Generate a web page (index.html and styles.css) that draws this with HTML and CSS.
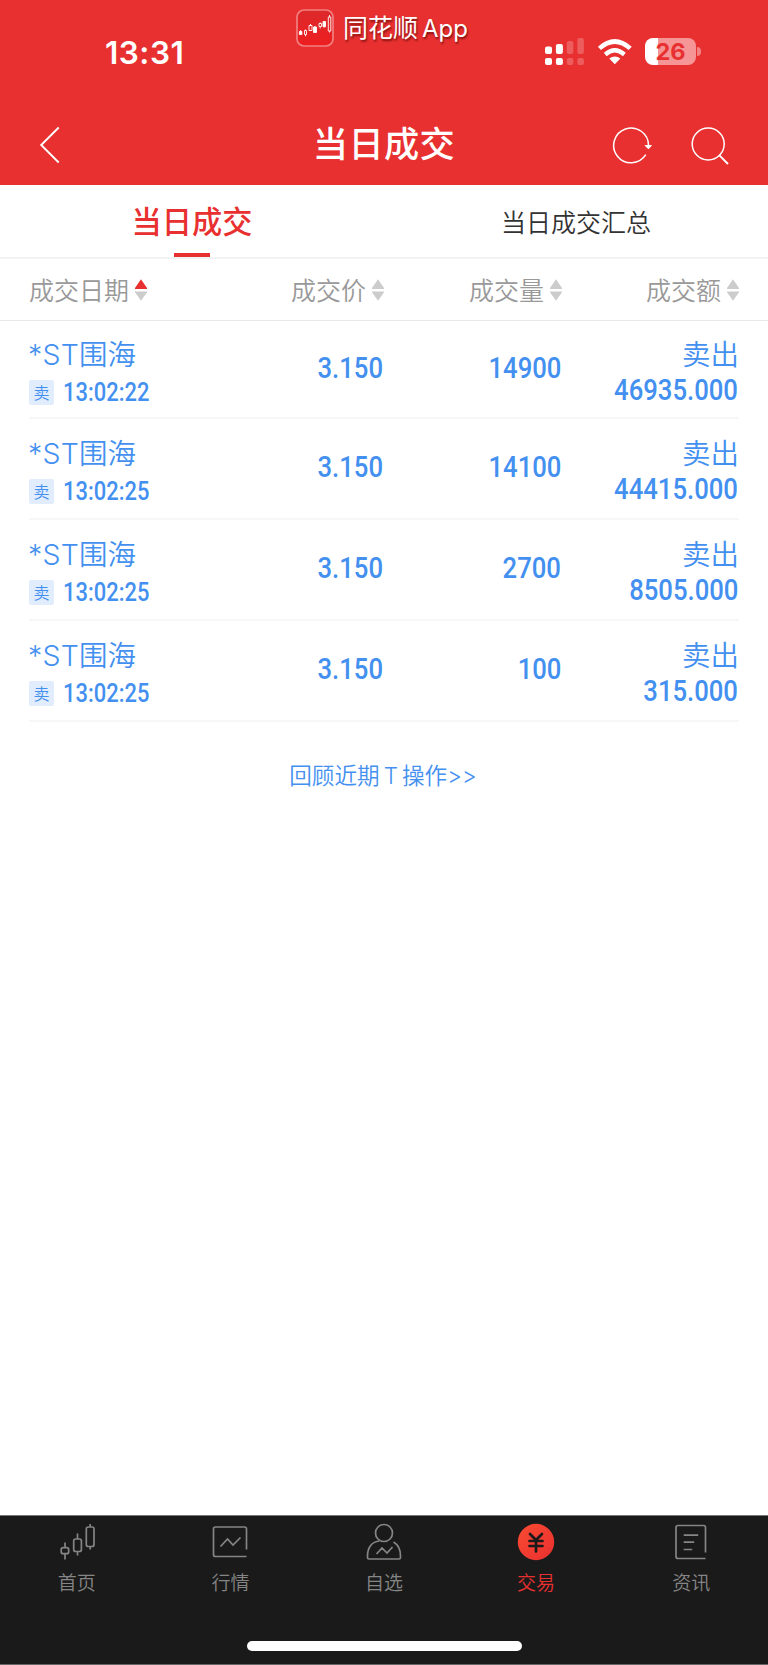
FILE: index.html
```html
<!DOCTYPE html>
<html lang="zh-CN">
<head>
<meta charset="utf-8">
<title>当日成交</title>
<link rel="stylesheet" href="styles.css">
</head>
<body>
<div class="app">
  <header class="top">
    <div class="status">
      <span class="clock">13:31</span>
      <div class="brand">
        <svg class="brand-icon" width="38" height="38" viewBox="0 0 38 38">
          <defs><linearGradient id="bg" x1="0" y1="0" x2="0" y2="1"><stop offset="0" stop-color="#dd292b"/><stop offset="1" stop-color="#ed1e20"/></linearGradient></defs>
          <rect x="1" y="1" width="36" height="36" rx="7" fill="url(#bg)" stroke="#f28080" stroke-width="1.7"/>
          <g fill="none" stroke="#fff" stroke-width=".9"><path d="M3.4 22.500h2.500v3h-2.500zM17.500 18h3v5.500h-3zM27 12.500h2.500v5.200H27z" fill="#fff"/><path d="M8.500 21.500h2v4h-2zM13 16.500h3v5h-3zM23 14.500h2.500v3H23zM32.300 8h2.500v14h-2.500zM4.600 21v1.500M9.500 20.500v1M9.500 25.500v1.800M14.500 15v1.500M19 17v1M24.200 13.500v1M24.200 17.500v2M33.500 6v2M33.500 22v1.500M28.200 17.500v1"/></g>
        </svg>
        <span class="brand-name">同花顺<span class="latin">App</span></span>
      </div>
      <div class="indicators">
        <svg width="40" height="28" viewBox="0 0 40 28" fill="#fff">
          <rect x="0" y="8.500" width="7" height="7.500" rx="2"/><rect x="10.900" y="6" width="7" height="10" rx="2"/>
          <rect x="21.800" y="3" width="6.500" height="13" rx="2" opacity=".22"/><rect x="32.400" y="0" width="6.500" height="16" rx="2" opacity=".22"/>
          <rect x="0" y="20" width="7" height="7" rx="2"/><rect x="10.900" y="20" width="7" height="7" rx="2"/>
          <rect x="21.800" y="20" width="6.500" height="7" rx="2" opacity=".22"/><rect x="32.400" y="20" width="6.500" height="7" rx="2" opacity=".22"/>
        </svg>
        <svg class="wifi" width="36" height="26" viewBox="0 0 36 26">
          <path d="M2.400 9.400Q17.800-4.400 33.200 9.400" fill="none" stroke="#fff" stroke-width="4.600"/>
          <path d="M8.200 15.500Q17.800 7.200 27.400 15.500" fill="none" stroke="#fff" stroke-width="4.300"/>
          <path d="M12.200 19.600Q17.800 15.300 23.400 19.600L17.800 25.200z" fill="#fff"/>
        </svg>
        <div class="battery"><span>26</span></div>
        <i class="nub"></i>
      </div>
    </div>
    <div class="titlebar">
      <svg class="back" width="22" height="38" viewBox="0 0 22 38" fill="none" stroke="#fff" stroke-width="1.900"><path d="M20.700 1.500 3.200 19 20.700 36.500"/></svg>
      <h1>当日成交</h1>
      <div class="actions">
        <svg width="40" height="38" viewBox="0 0 40 38"><path d="M36.500 18.500A17.400 17.400 0 1 0 33.800 27.700" fill="none" stroke="#fff" stroke-width="1.500"/><path d="M32.500 18h7.500q-.5 1.500-3.600 4.200-3.200-2.700-3.900-4.200z" fill="#fff"/></svg>
        <svg width="38" height="38" viewBox="0 0 38 38" fill="none" stroke="#fff" stroke-width="1.500"><circle cx="17.200" cy="17" r="16"/><path d="M28.200 28.200 37 37" stroke-width="1.900"/></svg>
      </div>
    </div>
  </header>
  <nav class="tabs">
    <div class="tab active">当日成交</div>
    <div class="tab">当日成交汇总</div>
  </nav>
  <div class="cols head">
    <div>成交日期<svg class="sort" width="12" height="22" viewBox="0 0 12 22"><path d="M6 .3 12 9v.9H0V9z" fill="#e83030"/><path d="M6 21.700 12 13.200v-.8H0v.8z" fill="#ccc"/></svg></div>
    <div>成交价<svg class="sort" width="12" height="22" viewBox="0 0 12 22" fill="#ccc"><path d="M6 .3 12 9v.9H0V9zM6 21.700 12 13.200v-.8H0v.8z"/></svg></div>
    <div>成交量<svg class="sort" width="12" height="22" viewBox="0 0 12 22" fill="#ccc"><path d="M6 .3 12 9v.9H0V9zM6 21.700 12 13.200v-.8H0v.8z"/></svg></div>
    <div>成交额<svg class="sort" width="12" height="22" viewBox="0 0 12 22" fill="#ccc"><path d="M6 .3 12 9v.9H0V9zM6 21.700 12 13.200v-.8H0v.8z"/></svg></div>
  </div>
  <main>
    <div class="cols row">
      <div><div class="name"><span class="st">*ST</span>围海</div><div class="when"><span class="badge">卖</span><span class="time">13:02:22</span></div></div>
      <div class="num">3.150</div><div class="num">14900</div>
      <div class="amount"><div class="side">卖出</div><div class="sum">46935.000</div></div>
    </div>
    <div class="cols row">
      <div><div class="name"><span class="st">*ST</span>围海</div><div class="when"><span class="badge">卖</span><span class="time">13:02:25</span></div></div>
      <div class="num">3.150</div><div class="num">14100</div>
      <div class="amount"><div class="side">卖出</div><div class="sum">44415.000</div></div>
    </div>
    <div class="cols row">
      <div><div class="name"><span class="st">*ST</span>围海</div><div class="when"><span class="badge">卖</span><span class="time">13:02:25</span></div></div>
      <div class="num">3.150</div><div class="num">2700</div>
      <div class="amount"><div class="side">卖出</div><div class="sum">8505.000</div></div>
    </div>
    <div class="cols row">
      <div><div class="name"><span class="st">*ST</span>围海</div><div class="when"><span class="badge">卖</span><span class="time">13:02:25</span></div></div>
      <div class="num">3.150</div><div class="num">100</div>
      <div class="amount"><div class="side">卖出</div><div class="sum">315.000</div></div>
    </div>
    <div class="review">回顾近期<span class="t">T</span>操作<span class="gt">&gt;&gt;</span></div>
  </main>
  <footer>
    <nav class="dock">
      <div class="item"><svg width="38" height="38" viewBox="0 0 38 38" fill="none" stroke="#858585" stroke-width="1.700"><rect x="2.200" y="24.700" width="7.500" height="6" rx="2"/><rect x="14.700" y="16" width="7.700" height="12.500" rx="2"/><rect x="27.300" y="4" width="7.700" height="19.500" rx="2"/><path d="M6 19.500v5M6 31v5.500M18.500 10.500V16M18.500 28.500v4M31.200 1v3M31.200 23.500v3"/></svg><span>首页</span></div>
      <div class="item"><svg width="38" height="38" viewBox="0 0 38 38" fill="none" stroke="#858585" stroke-width="1.700"><path d="M35.500 26.500V6q0-2-2-2H4.500q-2 0-2 2v25.500q0 2 2 2h31M9.500 23.500l7-7.500 5.500 6 7.500-7.500"/></svg><span>行情</span></div>
      <div class="item"><svg width="38" height="38" viewBox="0 0 38 38" fill="none" stroke="#858585" stroke-width="1.700"><circle cx="19" cy="10" r="8.500"/><path d="M14.500 18C6.500 18.500 2.500 25 2.500 33v1.500q0 1.500 1.500 1.500h30q1.500 0 1.500-1.500V33q0-10-7-14M11.500 31l5.500-6 5 5 5.500-6"/></svg><span>自选</span></div>
      <div class="item on"><svg width="38" height="38" viewBox="0 0 38 38"><defs><linearGradient id="yen" x1="0" y1="0" x2="1" y2="1"><stop stop-color="#fa4b32"/><stop offset="1" stop-color="#e93030"/></linearGradient></defs><circle cx="19" cy="19" r="18.200" fill="url(#yen)"/><path d="M13 11l6 6 6-6M12.500 18h13M12.500 23h13M19 17v11.500" fill="none" stroke="#1a1a1a" stroke-width="2.700" stroke-linecap="round"/></svg><span>交易</span></div>
      <div class="item"><svg width="38" height="38" viewBox="0 0 38 38" fill="none" stroke="#858585" stroke-width="1.700"><path d="M33.500 29.500V4.500q0-2-2-2H6q-2 0-2 2v29q0 2 2 2h27.500M11.700 12.200h14.500M11.700 19.200h10.500M11.700 26.500h8.500"/></svg><span>资讯</span></div>
    </nav>
    <div class="home"></div>
  </footer>
</div>
</body>
</html>
```
FILE: styles.css
```css
* { box-sizing: border-box; }
body { margin: 0; background: #fff; font-family: "Noto Sans CJK SC", sans-serif; font-weight: 350; }
svg { display: block; flex: none; }
.app { width: 768px; height: 1665px; display: flex; flex-direction: column; overflow: hidden; }

.top { height: 185px; background: #e83030; color: #fff; flex: none; }
.status { height: 105px; display: grid; grid-template-columns: 290px 230px 1fr; }
.clock { font: 600 31.500px/36px Inter, sans-serif; padding: 35px 0 0 105px; letter-spacing: .5px; }
.brand { display: flex; gap: 9px; padding: 9px 0 0 6px; }
.brand-name { font-size: 25px; line-height: 35px; white-space: nowrap; font-weight: 400; text-shadow: 1px 2px 2px rgba(80, 0, 0, .65); }
.latin { font-family: Inter, sans-serif; margin-left: 4px; font-size: 24px; }
.indicators { display: flex; padding: 38px 0 0 25px; }
.wifi { margin: 1px 0 0 12px; }
.battery { width: 51px; height: 27px; border-radius: 8px; margin-left: 12px; background: linear-gradient(90deg, #fff 13px, #f59595 13px); color: #e83030; font: 700 23.500px/27px Inter, sans-serif; text-align: center; }
.nub { width: 4px; height: 9px; margin: 9px 0 0 1px; border-radius: 0 4px 4px 0; background: #f28383; }
.titlebar { height: 80px; display: grid; grid-template-columns: 220px 1fr 220px; padding: 0 40px 0 38px; }
.back { margin-top: 21px; }
h1 { margin: 10px 0 0 2px; font-size: 35.200px; line-height: 54px; font-weight: 500; text-align: center; letter-spacing: .4px; }
.actions { display: flex; justify-content: flex-end; gap: 39px; padding: 21.500px 0 0; margin-right: -1px; }

.tabs { height: 74px; flex: none; display: grid; grid-template-columns: 1fr 1fr; border-bottom: 2px solid #f2f2f2; }
.tab { display: flex; justify-content: center; font-size: 25px; line-height: 72px; color: #333; position: relative; }
.active { color: #e83030; font-size: 30.200px; font-weight: 500; line-height: 70px; }
.active::after { content: ""; position: absolute; width: 36px; height: 4px; left: 174px; bottom: 0; background: #e83030; }

.cols { display: grid; grid-template-columns: 177px 178px 178px 177px; }
.cols > div:not(:first-child) { justify-self: end; }
.head { height: 62px; flex: none; padding: 0 29px; border-bottom: 1px solid #e9e9e9; color: #999; font-size: 25px; line-height: 60px; }
.head > div { display: flex; align-items: center; height: 60px; }
.sort { margin: 1px 0 0 6px; }

main { flex: 1; color: #4390f0; }
.row { margin: 0 29px; height: 101px; border-bottom: 2px solid #f7f7f7; align-items: end; }
.row:first-child { height: 98px; }
.row > div { height: 98px; }
.name, .side { font-size: 28.500px; line-height: 40px; padding-top: 12px; height: 51px; white-space: nowrap; }
.st { font-family: Inter, sans-serif; font-weight: 300; letter-spacing: .2px; margin-left: -1px; }
.when { display: flex; gap: 9px; padding-top: 8px; }
.badge { width: 25px; height: 25px; border-radius: 2px; background: #e1edfc; font-size: 16px; line-height: 25px; text-align: center; }
.time, .num, .sum { font-family: Roboto, sans-serif; font-weight: 500; white-space: nowrap; }
.time { font-size: 25.800px; line-height: 25px; transform: scaleX(.85); transform-origin: left; }
.num, .sum { font-size: 29px; transform: translateX(-1px) scaleX(.885); transform-origin: right; }
.num { line-height: 95px; }
.amount { text-align: right; }
.sum { line-height: 37px; }
.review { margin-top: 35px; padding-right: 2px; text-align: center; font-size: 22.600px; line-height: 36px; }
.t { font-family: Inter, sans-serif; margin: 0 4px; }
.gt { font-family: Inter, sans-serif; }

footer { height: 150px; flex: none; background: #1a1a1a; border-top: 1px solid #777; border-bottom: 1px solid #666; }
.dock { display: grid; grid-template-columns: repeat(5, 1fr); height: 125px; }
.item { display: flex; flex-direction: column; align-items: center; padding-top: 7px; color: #858585; font-size: 19px; line-height: 28px; }
.item svg { margin-left: 0; }
.item span { margin-top: 7px; }
.item:first-child svg { margin-left: 2px; }
.on { color: #e83030; }
.on svg, .on span { margin-left: -3px; }
.home { width: 275px; height: 10px; border-radius: 5px; background: #fff; margin: 0 auto; }
```
